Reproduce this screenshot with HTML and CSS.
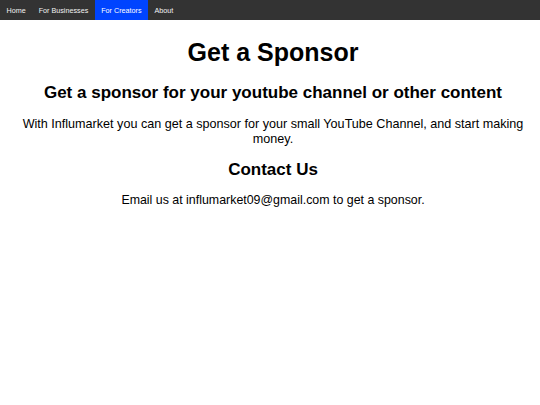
FILE: index.html
```html
<!DOCTYPE html>
<html>
<head>
<meta charset="utf-8">
<link rel="stylesheet" href="styles.css">
</head>
<body>
<nav class="topnav">
  <a href="#">Home</a>
  <a href="#">For Businesses</a>
  <a href="#" class="active">For Creators</a>
  <a href="#">About</a>
</nav>
<main class="content">
  <h1 class="title">Get a Sponsor</h1>
  <h2 class="subtitle">Get a sponsor for your youtube channel or other content</h2>
  <p class="text">With Influmarket you can get a sponsor for your small YouTube Channel, and start making money.</p>
  <h3 class="contact">Contact Us</h3>
  <p class="text email">Email us at influmarket09@gmail.com to get a sponsor.</p>
</main>
</body>
</html>
```
FILE: styles.css
```css
body {
  margin: 0;
  font-family: "Liberation Sans", Arial, sans-serif;
  background: #fff;
  color: #000;
}
.topnav {
  display: flex;
  background: #333;
  height: 20px;
}
.topnav a {
  color: #f2f2f2;
  text-decoration: none;
  font-size: 7.2px;
  padding: 0 6.5px;
  display: flex;
  align-items: center;
}
.topnav a.active {
  background: #04f;
  color: #fff;
}
.content {
  text-align: center;
  padding: 0 5px 0 11px;
}
.title {
  font-size: 25px;
  margin: 18px 0 0;
}
.subtitle {
  font-size: 17px;
  margin: 16px 0 0;
}
.text {
  font-size: 12.6px;
  line-height: 15px;
  margin: 14px 0 0;
}
.contact {
  font-size: 17px;
  margin: 13px 0 0;
}
.email {
  font-size: 12.4px;
  margin-top: 13px;
}
```
